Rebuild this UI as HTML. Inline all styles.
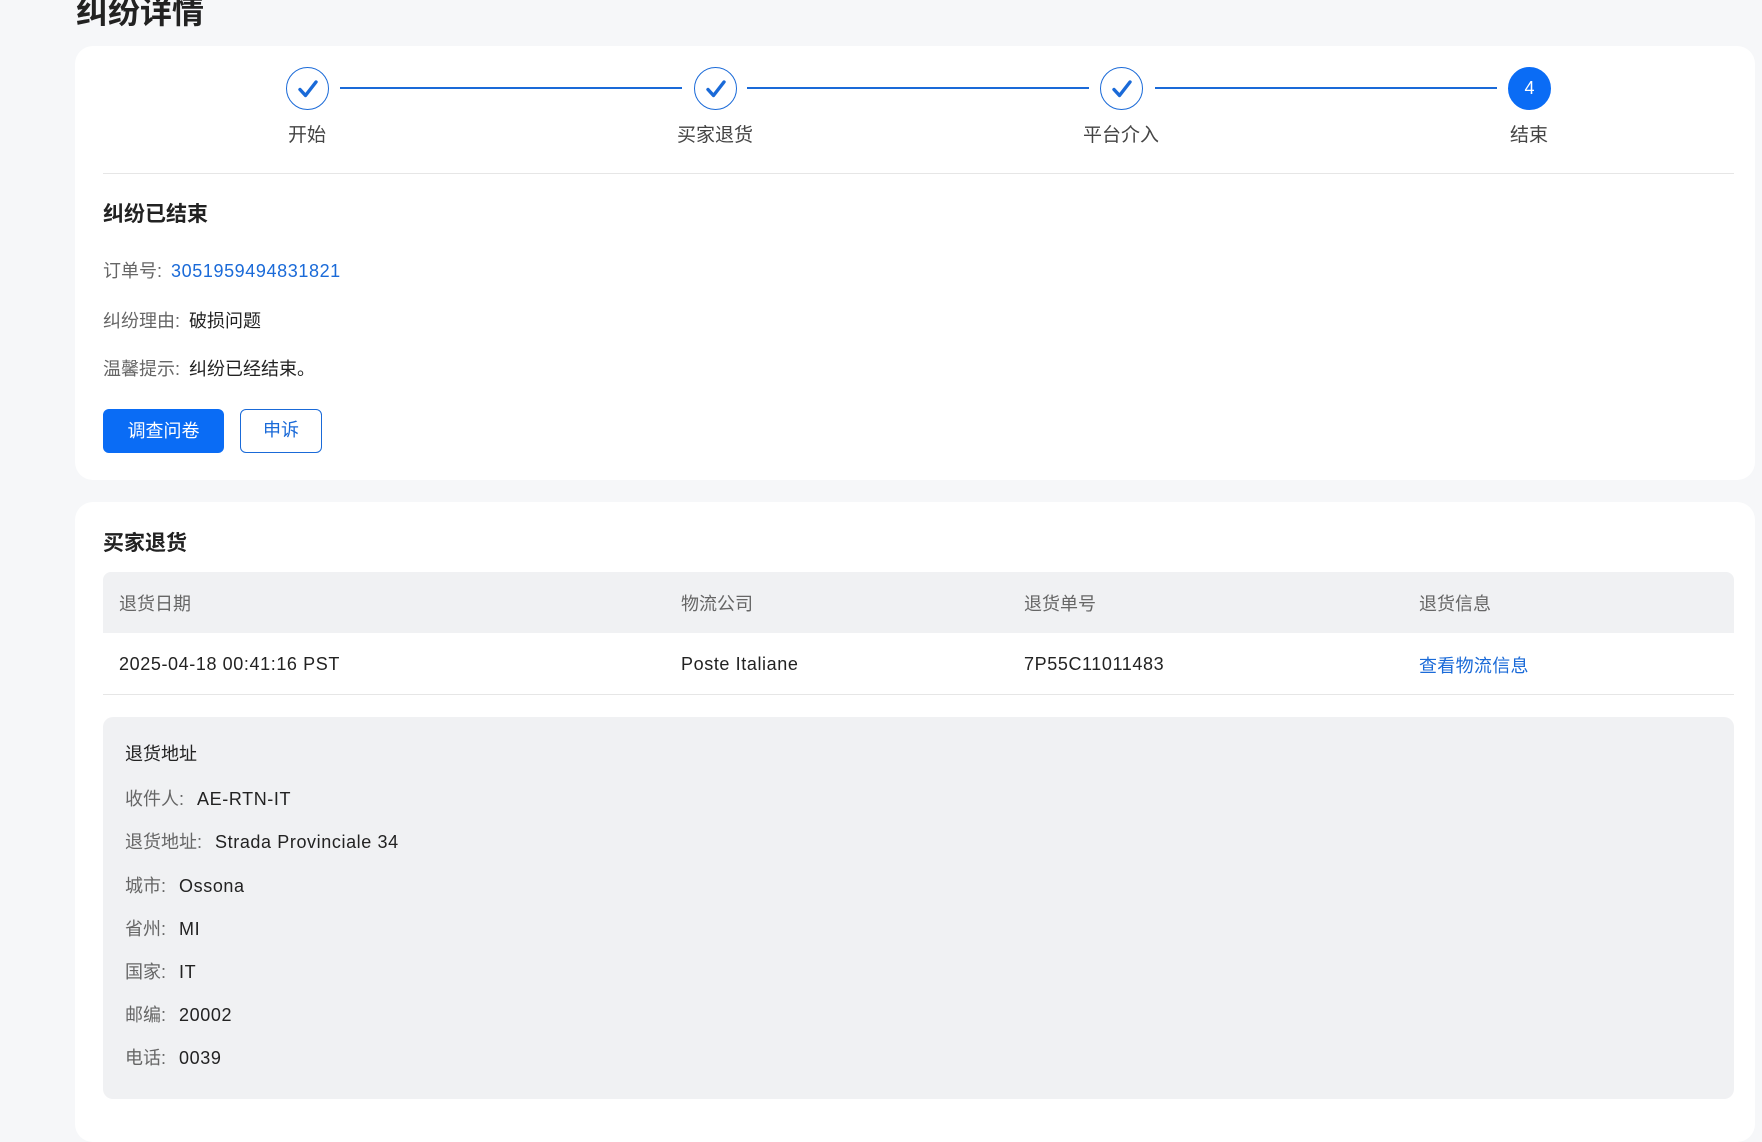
<!DOCTYPE html>
<html><head><meta charset="utf-8"><style>
*{box-sizing:border-box;margin:0;padding:0}
body{width:1762px;height:1111px;overflow:hidden;background:#f6f7f9;font-family:"Liberation Sans","Noto Sans CJK SC",sans-serif;color:#222;position:relative}
.a{position:absolute}
.card{position:absolute;background:#fff;border-radius:18px;left:75px;width:1680px}
.c{width:43px;height:43px;border-radius:50%;border:1.5px solid #1a6ad8;top:67px;display:flex;align-items:center;justify-content:center}
.ln{height:2px;background:#1a6ad8;top:87px}
.lbl{top:120px;font-size:19px;color:#444;width:120px;text-align:center}
.row{font-size:18px;left:103px}
.row .k{color:#666;margin-right:9px}
.th{font-size:18px;color:#666;top:590px}
.td{font-size:18px;color:#222;top:654px;letter-spacing:0.6px}
.ad{left:125px;font-size:18px}
.ad .k{color:#666;margin-right:13px}
.l{letter-spacing:0.6px}
</style></head><body>
<div class="a" style="left:76px;top:-13px;font-size:32px;font-weight:bold;color:#222">纠纷详情</div>
<div class="card" style="top:46px;height:434px"></div>
<div class="a c" style="left:286px"><svg width="24" height="24" viewBox="0 0 24 24"><path d="M4 12.5l5.5 6L20 5" fill="none" stroke="#1a6ad8" stroke-width="3.4" stroke-linecap="round" stroke-linejoin="round"/></svg></div>
<div class="a c" style="left:694px"><svg width="24" height="24" viewBox="0 0 24 24"><path d="M4 12.5l5.5 6L20 5" fill="none" stroke="#1a6ad8" stroke-width="3.4" stroke-linecap="round" stroke-linejoin="round"/></svg></div>
<div class="a c" style="left:1100px"><svg width="24" height="24" viewBox="0 0 24 24"><path d="M4 12.5l5.5 6L20 5" fill="none" stroke="#1a6ad8" stroke-width="3.4" stroke-linecap="round" stroke-linejoin="round"/></svg></div>
<div class="a c" style="left:1508px;background:#0a6cf5;border-color:#0a6cf5;color:#fff;font-size:18px">4</div>
<div class="a ln" style="left:340px;width:342px"></div>
<div class="a ln" style="left:747px;width:342px"></div>
<div class="a ln" style="left:1155px;width:342px"></div>
<div class="a lbl" style="left:247px">开始</div>
<div class="a lbl" style="left:655px">买家退货</div>
<div class="a lbl" style="left:1061px">平台介入</div>
<div class="a lbl" style="left:1469px">结束</div>
<div class="a" style="left:103px;top:173px;width:1631px;height:1px;background:#e6e6e6"></div>
<div class="a" style="left:103px;top:198px;font-size:21px;font-weight:bold">纠纷已结束</div>
<div class="a row" style="top:257px"><span class="k">订单号:</span><span class="l" style="color:#1a6ad8">3051959494831821</span></div>
<div class="a row" style="top:307px"><span class="k">纠纷理由:</span>破损问题</div>
<div class="a row" style="top:355px"><span class="k">温馨提示:</span>纠纷已经结束。</div>
<div class="a" style="left:103px;top:409px;width:121px;height:44px;background:#0a6cf5;border-radius:6px;color:#fff;font-size:18px;line-height:44px;text-align:center">调查问卷</div>
<div class="a" style="left:240px;top:409px;width:82px;height:44px;border:1.5px solid #1a6ad8;border-radius:6px;color:#1a6ad8;font-size:18px;line-height:41px;text-align:center">申诉</div>
<div class="card" style="top:502px;height:640px"></div>
<div class="a" style="left:103px;top:527px;font-size:21px;font-weight:bold">买家退货</div>
<div class="a" style="left:103px;top:572px;width:1631px;height:61px;background:#f0f1f3;border-radius:8px 8px 0 0"></div>
<div class="a th" style="left:119px">退货日期</div>
<div class="a th" style="left:681px">物流公司</div>
<div class="a th" style="left:1024px">退货单号</div>
<div class="a th" style="left:1419px">退货信息</div>
<div class="a" style="left:103px;top:694px;width:1631px;height:1px;background:#e6e6e6"></div>
<div class="a td" style="left:119px">2025-04-18 00:41:16 PST</div>
<div class="a td" style="left:681px">Poste Italiane</div>
<div class="a td" style="left:1024px">7P55C11011483</div>
<div class="a td" style="left:1419px;color:#1a6ad8;top:652px;letter-spacing:0.3px">查看物流信息</div>
<div class="a" style="left:103px;top:717px;width:1631px;height:382px;background:#f0f1f3;border-radius:10px"></div>
<div class="a ad" style="top:740px">退货地址</div>
<div class="a ad" style="top:785px"><span class="k">收件人:</span><span class="l">AE-RTN-IT</span></div>
<div class="a ad" style="top:828px"><span class="k">退货地址:</span><span class="l">Strada Provinciale 34</span></div>
<div class="a ad" style="top:872px"><span class="k">城市:</span><span class="l">Ossona</span></div>
<div class="a ad" style="top:915px"><span class="k">省州:</span><span class="l">MI</span></div>
<div class="a ad" style="top:958px"><span class="k">国家:</span><span class="l">IT</span></div>
<div class="a ad" style="top:1001px"><span class="k">邮编:</span><span class="l">20002</span></div>
<div class="a ad" style="top:1044px"><span class="k">电话:</span><span class="l">0039</span></div>
</body></html>
